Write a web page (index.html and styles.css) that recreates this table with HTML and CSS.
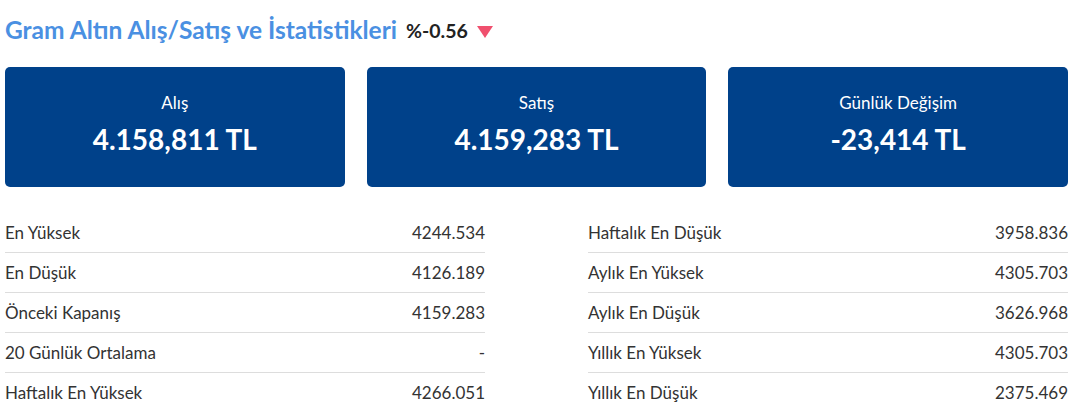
FILE: index.html
```html
<!DOCTYPE html>
<html lang="tr">
  <head>
    <meta charset="UTF-8" />
    <meta name="viewport" content="width=device-width, initial-scale=1.0" />
    <title>Gram Altın</title>
    <link rel="stylesheet" href="styles.css">
  </head>
  <body>
    <div class="container">
      <h1 class="title">
        Gram Altın Alış/Satış ve İstatistikleri
        <span class="change">%-0.56</span>
        <span class="arrow"></span>
      </h1>

      <div class="cards">
        <div class="card">
          <div class="card-label">Alış</div>
          <div class="card-value">4.158,811 TL</div>
        </div>
        <div class="card">
          <div class="card-label">Satış</div>
          <div class="card-value">4.159,283 TL</div>
        </div>
        <div class="card">
          <div class="card-label">Günlük Değişim</div>
          <div class="card-value">-23,414 TL</div>
        </div>
      </div>

      <div class="stats">
        <ul class="stat-list">
          <li><span>En Yüksek</span><span>4244.534</span></li>
          <li><span>En Düşük</span><span>4126.189</span></li>
          <li><span>Önceki Kapanış</span><span>4159.283</span></li>
          <li><span>20 Günlük Ortalama</span><span>-</span></li>
          <li><span>Haftalık En Yüksek</span><span>4266.051</span></li>
        </ul>
        <ul class="stat-list">
          <li><span>Haftalık En Düşük</span><span>3958.836</span></li>
          <li><span>Aylık En Yüksek</span><span>4305.703</span></li>
          <li><span>Aylık En Düşük</span><span>3626.968</span></li>
          <li><span>Yıllık En Yüksek</span><span>4305.703</span></li>
          <li><span>Yıllık En Düşük</span><span>2375.469</span></li>
        </ul>
      </div>
    </div>
  </body>
</html>
```

FILE: styles.css
```css
* { box-sizing: border-box; }
body {
  font-family: 'Lato', sans-serif;
  background: white;
  color: #333;
  margin: 0;
  padding: 0 5px;
}
.container {
  width: 1063px;
}
.title {
  display: flex;
  align-items: flex-start;
  gap: 9px;
  margin: 0;
  padding-top: 15px;
  height: 67px;
  font-size: 24.5px;
  font-weight: 700;
  color: #4a90e2;
}
.change {
  color: #222;
  font-size: 19.5px;
  margin-top: 4px;
}
.arrow {
  width: 0;
  height: 0;
  margin-top: 11px;
  border-left: 8px solid transparent;
  border-right: 8px solid transparent;
  border-top: 12px solid #f0506e;
}
.cards {
  display: grid;
  grid-template-columns: repeat(3, 1fr);
  gap: 22px;
}
.card {
  height: 120px;
  background: #00418a;
  border-radius: 5px;
  color: white;
  text-align: center;
  padding-top: 25px;
}
.card-label {
  font-size: 17px;
}
.card-value {
  font-size: 28px;
  font-weight: 700;
  margin-top: 9px;
}
.stats {
  display: grid;
  grid-template-columns: 480px 480px;
  justify-content: space-between;
  margin-top: 26px;
}
.stat-list {
  list-style: none;
  margin: 0;
  padding: 0;
}
.stat-list li {
  display: flex;
  justify-content: space-between;
  height: 40px;
  line-height: 39px;
  font-size: 17px;
  border-bottom: 1px solid #ddd;
}
.stat-list li:last-child {
  border-bottom: none;
}
```
